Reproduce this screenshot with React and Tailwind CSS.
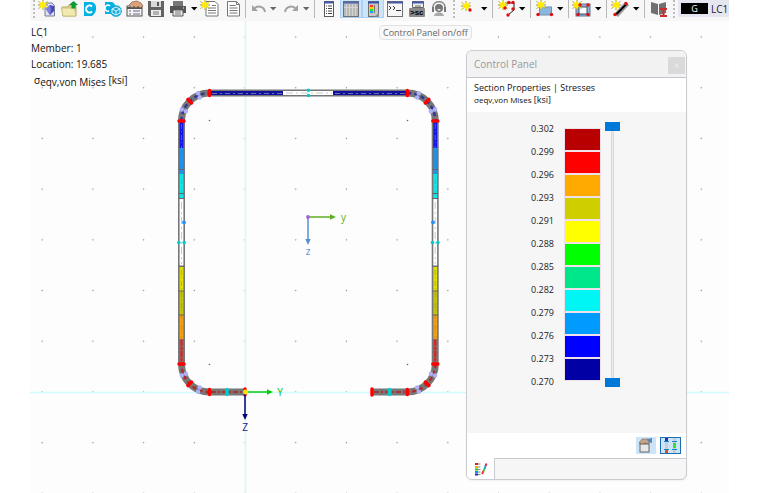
import { useState } from 'react';
import { X } from 'lucide-react';

/* ── Stress scale ── */
const LEVELS = ['0.302', '0.299', '0.296', '0.293', '0.291', '0.288', '0.285', '0.282', '0.279', '0.276', '0.273', '0.270'];
const BANDS = [
  'bg-[#b90000]', 'bg-[#ff0000]', 'bg-[#ffaa00]', 'bg-[#cfcf00]', 'bg-[#ffff00]', 'bg-[#00ff00]',
  'bg-[#00e68a]', 'bg-[#00f5f5]', 'bg-[#009bff]', 'bg-[#0000ff]', 'bg-[#0000a5]',
];

/* ── Toolbar pieces ── */
function Tool({ label, active, children }) {
  return (
    <button
      title={label}
      aria-label={label}
      className={`w-[22px] h-[18px] flex-shrink-0 ${active ? 'bg-[#cce4f7] border-x border-b border-[#a9d1f5]' : ''}`}
    >
      <svg width="22" height="18" viewBox="0 0 22 18" className={active ? '-ml-px' : ''}>{children}</svg>
    </button>
  );
}

function Caret({ label, dim }) {
  return (
    <button aria-label={label} className="w-2 h-[18px] flex-shrink-0">
      <svg width="8" height="18" viewBox="0 0 8 18"><path d="M1 7h6.4L4.2 10.6z" fill={dim ? '#666' : '#000'} /></svg>
    </button>
  );
}

function Sep({ tight }) {
  return <span className={`w-px h-[18px] bg-[#b8b8b8] flex-shrink-0 ${tight ? 'mx-px' : 'ml-1 mr-[3px]'}`} />;
}

function Grip() {
  return <span className="h-[18px] mx-[3px] border-l-2 border-dotted border-[#bdbdbd] flex-shrink-0" />;
}

function Star({ x = 6, y = 5 }) {
  return (
    <g transform={`translate(${x} ${y})`}>
      <path d="M-4.500-3.500L4.500 3.500M-4.500 3.500L4.500-3.500M0-5V5M-5 0H5" stroke="#96905a" strokeWidth="1" />
      <path d="M0-5L1.200-2 4-3 2.600 0 4 3 1.200 2 0 5-1.200 2-4 3-2.600 0-4-3-1.200-2z" fill="#ffec00" />
    </g>
  );
}

function Dots({ points }) {
  return points.map(([x, y]) => <circle key={`${x}-${y}`} cx={x} cy={y} r="1.7" fill="#e01010" />);
}

function Toolbar() {
  return (
    <header className="flex items-start h-[21px] bg-[#f7f7f7] overflow-hidden">
      <Grip />
      <span className="-ml-0.5" />
      <Tool label="New model">
        <path d="M9 3h7l2.5 2.5V16H9z" fill="#dfe2f5" stroke="#777a95" />
        <path d="M10 9l4-4 4 1v5l-4 4z" fill="#4a48c0" />
        <path d="M10 9l4-4 1 5-1 5z" fill="#7c80e0" />
        <Star x={7} y={5} />
      </Tool>
      <Tool label="Open">
        <path d="M4 7h6l1-2h7v11H5z" fill="#d8cf88" stroke="#b8ad65" />
        <path d="M3.5 8h13l1.5 8H5z" fill="#f1e9b0" stroke="#cdc27d" />
        <path d="M13.5 8.5V5H11l4.5-4L20 5h-2.500v3.500z" fill="#089a35" />
      </Tool>
      <Tool label="Cloud">
        <path d="M4 2h8c5 1 6 10 0 14H4z" fill="#00b1e2" />
        <path d="M12 6.500a3.500 3.500 0 1 0 0 5" fill="none" stroke="#fff" strokeWidth="2" />
      </Tool>
      <Tool label="Cloud settings">
        <path d="M3 2h7c4 1 5 8 0 12H3z" fill="#00b1e2" />
        <circle cx="14" cy="11" r="5.500" fill="#17a9dc" stroke="#17a9dc" strokeDasharray="2 1" />
        <path d="M10 9l4-2 4 2v4l-4 2-4-2zM10 9l4 2 4-2M14 11v4" fill="none" stroke="#d8f5ff" />
        <path d="M8 6a3 3 0 1 0-1 5" fill="none" stroke="#fff" strokeWidth="1.500" />
      </Tool>
      <Tool label="Properties">
        <rect x="3" y="6" width="15" height="10" fill="#f4f4f4" stroke="#555" />
        <path d="M3 8h15" stroke="#555" strokeWidth="2" />
        <path d="M5 11h2M5 14h2M9 11h7M9 14h7" stroke="#668" />
        <path d="M5 5l3-3 5-1 4 2 2 3-3 2-2-2-2 2-2-2-2 2z" fill="#d9a27b" stroke="#87614a" strokeWidth=".7" />
      </Tool>
      <Tool label="Save">
        <path d="M2 1h16v16H4l-2-2z" fill="#626262" />
        <path d="M5 1h10v6H5z" fill="#d8d8d8" /><path d="M5 10h10v6H5z" fill="#eee" />
        <path d="M7 12h6M7 14h6" stroke="#777" /><path d="M11 2h2v4h-2z" fill="#555" />
      </Tool>
      <Tool label="Print">
        <path d="M5 1h10v5H5z" fill="#777" /><path d="M2 6h16v7H2z" fill="#555" />
        <path d="M5 10h10v6H5z" fill="#eee" stroke="#555" /><path d="M7 12h6M7 14h6" stroke="#777" />
        <path d="M15 8h1" stroke="#fff" />
      </Tool>
      <Caret label="Print options" />
      <span className="w-0.5" />
      <Tool label="New report">
        <path d="M6 1.500h9l3 3V16H6z" fill="#fff" stroke="#777" />
        <path d="M8 8h8M8 10.500h8M8 13h8M12 5.500h4" stroke="#777" />
        <Star x={5} y={5} />
      </Tool>
      <Tool label="Report">
        <path d="M5.500 1.500h9l3 3V16h-12z" fill="#fff" stroke="#777" />
        <path d="M14.500 1.500v3h3M7.500 5.500h6M7.500 8h8M7.500 10.500h8M7.500 13h8" fill="none" stroke="#777" />
      </Tool>
      <Sep tight />
      <Tool label="Undo">
        <path d="M7 9c3-4 10-3 11 3" fill="none" stroke="#a2a2a2" strokeWidth="2" />
        <path d="M5 5v6h6z" fill="#a2a2a2" />
      </Tool>
      <Caret label="Undo list" dim />
      <span className="w-[3px]" />
      <Tool label="Redo">
        <path d="M16 9C13 5 6 6 5 12" fill="none" stroke="#a2a2a2" strokeWidth="2" />
        <path d="M18 5v6h-6z" fill="#a2a2a2" />
      </Tool>
      <Caret label="Redo list" dim />
      <Sep />
      <Tool label="Navigator">
        <rect x="6.500" y="1.500" width="9" height="15" fill="#fff" stroke="#5a5a5a" />
        <path d="M6 2.500h10" stroke="#4458a8" strokeWidth="2" />
        <path d="M8 6h1M8 8.500h1M8 11h1M8 13.500h1M10 6h4M10 8.500h4M10 11h4M10 13.500h4" stroke="#444" />
      </Tool>
      <Tool label="Tables" active>
        <rect x="3.500" y="1.500" width="15" height="15" fill="#b8b8b8" stroke="#707070" />
        <path d="M3 2.500h16" stroke="#4f68b0" strokeWidth="2" />
        <path d="M6.500 4v12M9.500 4v12M12.500 4v12M15.500 4v12M4 7.500h14" stroke="#d4d4d4" />
      </Tool>
      <Tool label="Control Panel on/off" active>
        <rect x="6.500" y="1.500" width="10" height="15" fill="#c8c8c8" stroke="#707070" />
        <path d="M6 2.500h11" stroke="#3752ac" strokeWidth="2" />
        <path d="M8 5h3v2H8z" fill="#f33" /><path d="M8 7h3v2H8z" fill="#fc0" />
        <path d="M8 9h3v2H8z" fill="#2d4" /><path d="M8 11h3v2H8z" fill="#29f" />
        <path d="M12.500 5v8" stroke="#777" /><path d="M12 17l5-4v4z" fill="#888" />
      </Tool>
      <Tool label="Console">
        <rect x="3.500" y="1.500" width="15" height="15" fill="#f6f6f6" stroke="#707070" />
        <path d="M3 2.500h16" stroke="#4a58a0" strokeWidth="2" />
        <path d="M5 6l2 2-2 2M9 6l2 2-2 2M12 10.500h5" fill="none" stroke="#333" />
      </Tool>
      <Tool label="Script">
        <path d="M6.500 1.500h11v6h-11z" fill="#eee" stroke="#666" />
        <path d="M6 2.500h12" stroke="#4458a8" strokeWidth="2" /><path d="M9 6h6" stroke="#666" />
        <rect x="3" y="8" width="16" height="9" rx="1" fill="#8a8a8a" />
        <text x="4" y="15" fontSize="8" fontWeight="700" fontFamily="Liberation Sans, sans-serif" fill="#000">&gt;sc</text>
      </Tool>
      <Tool label="Support">
        <path d="M5 10V7c0-7 12-7 12 0v3" fill="none" stroke="#888" strokeWidth="1.500" />
        <circle cx="11" cy="8" r="4" fill="#777" /><path d="M4 7h2v5H4zM16 7h2v5h-2z" fill="#777" />
        <path d="M6 16c1-5 9-5 10 0z" fill="#aaa" />
        <path d="M9 9h4l-2 2z" fill="#eee" />
      </Tool>
      <Grip />
      <Tool label="New node">
        <Star x={8} y={6} /><Dots points={[[12, 10]]} />
      </Tool>
      <Caret label="Node types" />
      <Sep />
      <Tool label="New line">
        <path d="M9 3h9v7l-6 5M9 3v6" fill="none" stroke="#222" />
        <Star x={7} y={5} />
        <Dots points={[[9, 8], [13, 2.500], [17, 2.500], [17, 9], [12, 15]]} />
      </Tool>
      <Caret label="Line types" />
      <Sep />
      <Tool label="New surface">
        <rect x="5.500" y="7" width="12" height="8" fill="#8ab5dc" stroke="#7291b2" />
        <Star x={7} y={5} /><Dots points={[[4, 14.500], [17.500, 14.500]]} />
      </Tool>
      <Caret label="Surface types" />
      <Sep />
      <Tool label="New opening">
        <rect x="4" y="4" width="14" height="12" fill="#91b3d9" stroke="#61788f" />
        <rect x="7" y="7" width="8" height="7" fill="#fff" stroke="#39506b" />
        <Star x={5} y={5} />
        <Dots points={[[8, 5], [16, 5], [6, 14.500], [16, 14.500]]} />
      </Tool>
      <Caret label="Opening types" />
      <Sep />
      <Tool label="New member">
        <path d="M4 14L15 2l4 3L8 17z" fill="#999" />
        <path d="M6 14.500L17 3.500" stroke="#000" strokeWidth="2" />
        <Star x={6} y={5} /><Dots points={[[5, 14.500], [16, 3.500]]} />
      </Tool>
      <Caret label="Member types" />
      <Sep />
      <Tool label="Section library">
        <path d="M3 2l7 2v11l-7-2zM18 2l-7 2v11l7-2z" fill="#707070" />
        <path d="M12 9h7M12 16h7M15.500 9v7" stroke="#c52e2e" strokeWidth="2" />
      </Tool>
      <Grip />
      <button className="flex-1 h-[17px] pl-[3px] flex items-center bg-[#e6e6f1] text-[10px] leading-none text-[#222]">
        <span className="w-[27px] h-[11px] flex-shrink-0 flex items-center justify-center bg-black text-white text-[9px]">G</span>
        <span className="ml-[3px]">LC1</span>
      </button>
    </header>
  );
}

/* ── Hollow section with stress bands, in model space ── */
const WALL = [
  { y: 121, h: 27, c: '#1414ee' },
  { y: 148, h: 26, c: '#1c8fe8' },
  { y: 174, h: 24, c: '#10e6e8' },
  { y: 198, h: 68, c: '#ffffff' },
  { y: 267, h: 24, c: '#dede00' },
  { y: 291, h: 24, c: '#c4c40c' },
  { y: 315, h: 24, c: '#f0a010' },
  { y: 339, h: 25, c: '#8c6a6a' },
];

function Wall({ x }) {
  return (
    <g>
      <rect x={x - 3.500} y="121" width="7" height="243" fill="#777" />
      {WALL.map(s => <rect key={s.y} x={x - 1.900} y={s.y} width="3.800" height={s.h} fill={s.c} />)}
      <path d={`M${x} 124V196M${x} 270V338`} stroke="#8a8a8a" strokeWidth=".6" strokeDasharray="5 2 1 3" />
      <path d={`M${x} 340V363`} stroke="#f01818" strokeWidth="2" strokeDasharray="6 1 3 1" />
      <path d={`M${x} 202V264`} stroke="#c8c8c8" strokeWidth="1" strokeDasharray="7 3 2 3" />
      <path d={`M${x - 3} 169.500h6M${x - 3} 193.500h6M${x - 3} 198.500h6M${x - 3} 266h6M${x - 3} 291h6M${x - 3} 315h6`} stroke="#666" />
      <circle cx={x - 2.700} cy="242.500" r="1.800" fill="#00cccc" />
      <circle cx={x + 2.700} cy="242.500" r="1.800" fill="#00cccc" />
    </g>
  );
}

/* Rounded corner: arc of radius 28 around (cx, cy), starting at angle `from` */
function Corner({ cx, cy, from, core }) {
  const at = (deg, r) => {
    const a = (deg * Math.PI) / 180;
    return [cx + r * Math.cos(a), cy + r * Math.sin(a)];
  };
  const [x1, y1] = at(from, 28);
  const [x2, y2] = at(from + 90, 28);
  const d = `M${x1} ${y1}A28 28 0 0 1 ${x2} ${y2}`;
  return (
    <g fill="none">
      <path d={d} stroke="#777" strokeWidth="7" />
      <path d={d} stroke={core} strokeWidth="2.500" strokeDasharray="4 3" />
      {[22.5, 67.5].map(o => [25.500, 30].map(r => {
        const [x, y] = at(from + o, r);
        return <circle key={`${o}-${r}`} cx={x} cy={y} r="2.200" fill="#aeb0f8" />;
      }))}
      {[0, 45, 90].map(o => {
        const [ax, ay] = at(from + o, 25.500);
        const [bx, by] = at(from + o, 30.500);
        return <path key={o} d={`M${ax} ${ay}L${bx} ${by}`} stroke="#ff0000" strokeWidth="3.500" strokeLinecap="round" />;
      })}
    </g>
  );
}

function Axis({ x, y, down, color, len }) {
  return (
    <g transform={`translate(${x} ${y})${down ? ' rotate(90)' : ''}`}>
      <path d={`M0 0H${len - 5}`} stroke={color} strokeWidth="1.500" />
      <path d={`M${len - 6}-2.700L${len} 0L${len - 6} 2.700z`} fill={color} />
    </g>
  );
}

function SectionDrawing() {
  return (
    <svg className="absolute inset-0 w-full h-full" role="img" aria-label="Section stresses">
      <defs>
        <pattern id="grid" x="219.700" y="345.700" width="50.700" height="50.700" patternUnits="userSpaceOnUse">
          <circle cx="25.300" cy="46.300" r=".7" fill="#888" />
        </pattern>
      </defs>
      <g transform="translate(-30 -21)">
        <rect x="30" y="25" width="2000" height="1500" fill="url(#grid)" />
        <path d="M245.500 21V2000M30 392.500H3000" stroke="#d2fbfd" strokeWidth="1.500" />
        {[[209.5, 120.5], [407.5, 120.5], [209.5, 364.5], [407.5, 364.5]].map(([x, y]) => (
          <circle key={`${x}-${y}`} cx={x} cy={y} r=".8" fill="#666" />
        ))}

        {/* Top flange */}
        <rect x="209.500" y="89.500" width="198" height="7" fill="#777" />
        <path d="M210 93H283M333 93H407" stroke="#1111a0" strokeWidth="4" />
        <path d="M212 93.500H282M335 93.500H405" stroke="#8888aa" strokeWidth=".8" strokeDasharray="5 3 2 3" />
        <path d="M283 93H333" stroke="#fff" strokeWidth="4" />
        <path d="M286 93H332" stroke="#ccc" strokeDasharray="7 3 2 3" />
        <circle cx="308.500" cy="90.300" r="1.800" fill="#00cccc" />
        <circle cx="308.500" cy="95.500" r="1.800" fill="#00cccc" />

        <Wall x={181.5} />
        <Wall x={435.2} />
        <circle cx="184" cy="222.300" r="1.900" fill="#1e90ff" />
        <circle cx="433" cy="222.300" r="1.900" fill="#1e90ff" />

        {/* Bottom lips */}
        <path d="M209.500 392H245M372 392H407.500" stroke="#777" strokeWidth="7" />
        <path d="M211 392H244M374 392H407" stroke="#b82020" strokeWidth="1.500" strokeDasharray="5 2 2 2" />
        <path d="M227 389.500V394.500M389.500 389.500V394.500" stroke="#00cccc" strokeWidth="3.500" strokeLinecap="round" />
        <path d="M372 389V395" stroke="#ff0000" strokeWidth="3.500" strokeLinecap="round" />
        <path d="M245 389V395" stroke="#ff0000" strokeWidth="3.500" strokeLinecap="round" />

        <Corner cx={209.5} cy={121} from={180} core="#34349a" />
        <Corner cx={407.3} cy={121} from={270} core="#34349a" />
        <Corner cx={209.5} cy={364} from={90} core="#b02c2c" />
        <Corner cx={407.3} cy={364} from={0} core="#b02c2c" />

        {/* Axes */}
        <Axis x={308} y={217} len={28} color="#5fae22" />
        <Axis x={308} y={217} len={28} down color="#5590cf" />
        <circle cx="308" cy="217" r="1.900" fill="#a060d8" />
        <Axis x={245} y={392} len={28} color="#00d010" />
        <Axis x={245} y={392} len={28} down color="#000078" />
        <circle cx="245.500" cy="392" r="2.500" fill="#ffe000" />
        <g fontFamily="Open Sans, sans-serif" fontSize="10" textAnchor="middle">
          <text x="343.500" y="221" fill="#5fae22">y</text>
          <text x="308" y="255" fill="#5590cf">z</text>
          <text x="280" y="396" fill="#00c010">Y</text>
          <text x="245" y="431" fill="#202090">Z</text>
        </g>
      </g>
    </svg>
  );
}

const SLIDER =
  '[grid-area:1/1] w-[15px] h-[265px] appearance-none bg-transparent pointer-events-none [writing-mode:vertical-lr] ' +
  '[&::-webkit-slider-thumb]:appearance-none [&::-webkit-slider-thumb]:pointer-events-auto ' +
  '[&::-webkit-slider-thumb]:w-[15px] [&::-webkit-slider-thumb]:h-[9px] [&::-webkit-slider-thumb]:bg-[#0078d7]';

function ControlPanel() {
  const [upper, setUpper] = useState(0);
  const [lower, setLower] = useState(100);

  return (
    <section className="absolute left-[436px] top-[29px] w-[221px] flex flex-col rounded-md border border-[#cacad0] bg-[#f6f6f6] shadow-xs overflow-hidden">
      <div className="h-[27px] pl-[7px] pr-px flex items-center justify-between border-b border-[#c4c4d0] bg-[#f2f2f2]">
        <h2 className="text-[10px] leading-4 text-[#999]">Control Panel</h2>
        <button aria-label="Close" className="w-[17px] h-[17px] mt-0.5 flex items-center justify-center bg-[#dadada] text-white">
          <X size={7} />
        </button>
      </div>

      <div className="h-[34px] pl-[7px] pt-1 bg-white text-[9px] leading-3 text-[#111]">
        <p>Section Properties | Stresses</p>
        <p><span className="text-[8px]">σeqv,von Mises</span> [ksi]</p>
      </div>

      <div className="h-[321px] flex pt-[10px] pl-16">
        <ul className="w-[22px] text-[9px] leading-[23px] text-right text-[#222] -mt-[5px]">
          {LEVELS.map(v => <li key={v} className="whitespace-nowrap">{v}</li>)}
        </ul>
        <div className="w-[37px] ml-[11px] pt-[6px] flex flex-col">
          {BANDS.map(c => (
            <div key={c} className={`h-[23px] flex-shrink-0 border border-[#f0e0ea] ${c}`} />
          ))}
        </div>
        <div className="h-[265px] ml-1 grid justify-items-center">
          <span className="[grid-area:1/1] w-[3px] border border-[#d5d9db] bg-[#e8ebec]" />
          <input type="range" aria-label="Upper limit" className={SLIDER} value={upper} onChange={e => setUpper(+e.target.value)} />
          <input type="range" aria-label="Lower limit" className={SLIDER} value={lower} onChange={e => setLower(+e.target.value)} />
        </div>
      </div>

      <div className="h-[25px] pl-1 pr-[5px] flex items-center justify-end gap-1 bg-white">
        <button aria-label="Edit colours" className="w-5 h-[17px] bg-[#cce4f7]">
          <svg width="20" height="17" viewBox="0 0 20 17">
            <rect x="4" y="6" width="9" height="9" fill="#e8e8e8" stroke="#666" />
            <path d="M4 6.500h9" stroke="#666" strokeWidth="2" />
            <path d="M3 6l3-4h6l2 3-2 2-3-1-2 1z" fill="#c5a489" stroke="#7a6759" strokeWidth=".6" />
            <path d="M11 2l5-1v5l-4-1z" fill="#5f86b4" />
          </svg>
        </button>
        <button aria-label="Section view" className="w-[21px] h-[17px] border border-[#1e6eb4] bg-[#cce4f7]">
          <svg width="19" height="15" viewBox="0 0 19 15">
            <path d="M5.500 0v15M13.500 0v15" stroke="#c9ccd0" strokeWidth="3" />
            <path d="M3 3.500h5M3 11.500h5M11 3.500h5M11 11.500h5" stroke="#1685c8" />
            <path d="M4 0h3v3H4z" fill="#2335b5" /><path d="M4 12h3v3H4z" fill="#e54a22" />
            <path d="M12 5h3v5h-3z" fill="#39dc35" />
          </svg>
        </button>
      </div>

      <div className="h-[21px] flex">
        <button aria-label="Colour scale" className="w-[28px] border-r border-[#cacad0] bg-white">
          <svg width="27" height="20" viewBox="0 0 27 20">
            <path d="M8 5h3" stroke="#d22" strokeWidth="2" /><path d="M8 8h3" stroke="#fa0" strokeWidth="2" />
            <path d="M8 10.500h3" stroke="#0d0" strokeWidth="2" /><path d="M8 13h3" stroke="#09e" strokeWidth="2" />
            <path d="M8 15.500h3" stroke="#22b" strokeWidth="2" />
            <path d="M11 5h2.500M11 8h2.500M11 10.500h2.500M11 13h2.500M11 15.500h2.500" stroke="#888" />
            <path d="M15 15l1.500-3" stroke="#e33" strokeWidth="2" /><path d="M16.500 12l1-2" stroke="#3c3" strokeWidth="2" />
            <path d="M17.500 10l1-3" stroke="#1ac" strokeWidth="2" /><path d="M18.500 7l1-2.500" stroke="#d24" strokeWidth="2" />
          </svg>
        </button>
        <div className="flex-1 border-t border-[#cacad0]" />
      </div>
    </section>
  );
}

export default function App() {
  return (
    <div className="min-h-screen flex flex-col bg-white pl-[30px] pr-[31px] font-['Open_Sans','Noto_Sans',sans-serif]">
      <Toolbar />

      <main className="relative flex-1 min-h-[472px] bg-[#fdfdfd] overflow-hidden">
        <SectionDrawing />

        <div className="relative pl-px pt-[3px] text-[10px] leading-4 text-[#111]">
          <p>LC1</p>
          <p>Member: 1</p>
          <p>Location: 19.685</p>
          <p className="pl-[3px]">σ<sub className="text-[10px] -bottom-0.5">eqv,von Mises</sub> [ksi]</p>
        </div>

        <div
          role="tooltip"
          className="absolute left-[349px] top-1 h-[15px] px-[3px] flex items-center rounded-sm border border-[#e2e2e2] bg-[#f9f9f9] text-[9px] text-[#666] whitespace-nowrap"
        >
          Control Panel on/off
        </div>

        <ControlPanel />
      </main>
    </div>
  );
}
